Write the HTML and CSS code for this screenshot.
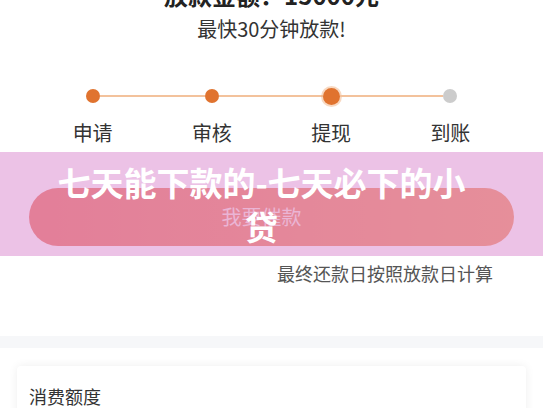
FILE: index.html
```html
<!DOCTYPE html>
<html lang="zh-CN">
<head>
<meta charset="utf-8">
<title>七天能下款的-七天必下的小贷</title>
<link rel="stylesheet" href="styles.css">
</head>
<body>
<div class="page">
  <div class="amount">放款金额：15000元</div>
  <div class="fast">最快30分钟放款!</div>

  <div class="steps">
    <div class="step first">
      <div class="track"><span class="seg"></span><span class="dot"></span><span class="seg"></span></div>
      <div class="label">申请</div>
    </div>
    <div class="step">
      <div class="track"><span class="seg"></span><span class="dot"></span><span class="seg"></span></div>
      <div class="label">审核</div>
    </div>
    <div class="step">
      <div class="track"><span class="seg"></span><span class="dot active"></span><span class="seg"></span></div>
      <div class="label">提现</div>
    </div>
    <div class="step last">
      <div class="track"><span class="seg"></span><span class="dot todo"></span><span class="seg"></span></div>
      <div class="label">到账</div>
    </div>
  </div>

  <div class="btn">我要催款</div>
  <div class="note">最终还款日按照放款日计算</div>

  <div class="divider"></div>

  <div class="card">
    <div class="card-title">消费额度</div>
  </div>

  <div class="banner">
    <h1 class="banner-title">七天能下款的-七天必下的小贷</h1>
  </div>
</div>
</body>
</html>
```
FILE: styles.css
```css
html, body {
  margin: 0;
  padding: 0;
  background: #ffffff;
}
body {
  font-family: "Noto Sans CJK SC", "Noto Sans", sans-serif;
  color: #333333;
  overflow: hidden;
}
.page {
  position: relative;
  width: 543px;
  height: 408px;
  overflow: hidden;
}
.amount {
  margin-top: -20px;
  height: 30px;
  line-height: 30px;
  font-size: 24px;
  font-weight: 700;
  text-align: center;
  color: #222222;
}
.fast {
  margin-top: 5px;
  height: 28px;
  line-height: 28px;
  font-size: 20px;
  text-align: center;
  color: #333333;
}
.steps {
  margin-top: 42px;
  padding: 0 33px;
  display: grid;
  grid-template-columns: repeat(4, 1fr);
}
.step {
  display: flex;
  flex-direction: column;
  align-items: center;
}
.track {
  width: 100%;
  height: 22px;
  display: flex;
  align-items: center;
}
.seg {
  flex: 1;
  height: 2px;
  background: #f3c29c;
}
.first .seg:first-child,
.last .seg:last-child {
  background: transparent;
}
.dot {
  width: 14px;
  height: 14px;
  border-radius: 50%;
  background: #e0732f;
  flex: none;
}
.dot.active {
  width: 17px;
  height: 17px;
  box-shadow: 0 0 0 2px rgba(240, 170, 120, 0.45);
}
.dot.todo {
  background: #cccccc;
}
.label {
  margin-top: 12px;
  line-height: 28px;
  font-size: 20px;
  color: #333333;
}
.btn {
  margin: 41px 29px 0;
  padding-right: 20px;
  height: 58px;
  border-radius: 29px;
  background: linear-gradient(90deg, #ea6a56, #f18e58);
  color: rgba(255, 255, 255, 0.78);
  font-size: 20px;
  line-height: 58px;
  text-align: center;
}
.note {
  margin-top: 14px;
  padding-right: 50px;
  line-height: 26px;
  font-size: 18px;
  text-align: right;
  color: #555555;
}
.divider {
  margin-top: 50px;
  height: 12px;
  background: #f6f7f9;
}
.card {
  margin: 18px 17px 0;
  padding: 17px 12px;
  background: #ffffff;
  border-radius: 4px;
  box-shadow: 0 0 10px rgba(0, 0, 0, 0.07);
}
.card-title {
  line-height: 26px;
  font-size: 18px;
  color: #333333;
}
.banner {
  position: absolute;
  left: 0;
  right: 0;
  top: 152px;
  height: 104px;
  background: rgba(221, 144, 210, 0.55);
  display: flex;
  align-items: center;
  justify-content: center;
  padding: 0 70px 0 50px;
  box-sizing: border-box;
}
.banner-title {
  margin: 0;
  font-size: 33px;
  line-height: 44px;
  font-weight: 700;
  color: #ffffff;
  text-align: center;
}
```
